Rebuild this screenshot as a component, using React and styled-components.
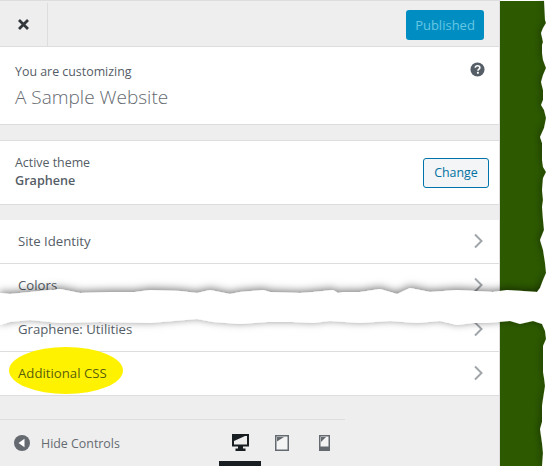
import React from 'react';
import styled, { createGlobalStyle } from 'styled-components';

const GlobalStyle = createGlobalStyle`
  html, body {
    margin: 0;
    padding: 0;
    background: #fff;
  }
  * {
    box-sizing: border-box;
  }
`;

const Page = styled.div`
  position: relative;
  display: flex;
  width: 547px;
  height: 466px;
  overflow: hidden;
  font-family: "Open Sans", "Noto Sans", sans-serif;
  font-size: 13px;
  color: #555d66;
`;

const Sidebar = styled.div`
  display: flex;
  flex-direction: column;
  width: 500px;
  background: #eeeeee;
  border-top: 1px solid #dddddd;
  border-right: 1px solid #dddddd;
`;

const Preview = styled.div`
  flex: 1;
  margin-top: 1px;
  background: #2d5a00;
`;

const Toolbar = styled.div`
  display: flex;
  align-items: center;
  justify-content: space-between;
  height: 46px;
  padding-right: 15px;
  border-bottom: 1px solid #dddddd;
`;

const CloseButton = styled.div`
  display: flex;
  align-items: center;
  justify-content: center;
  width: 48px;
  height: 43px;
  margin-top: 2px;
  border-right: 1px solid #dddddd;
  color: #32373c;
`;

const PublishButton = styled.div`
  width: 78px;
  height: 30px;
  margin-top: 3px;
  border-radius: 3px;
  background: #008ec2;
  color: #66c6e4;
  font-size: 13px;
  line-height: 30px;
  text-align: center;
`;

const Info = styled.div`
  position: relative;
  height: 78px;
  padding: 16px 15px 0;
  background: #fff;
  border-bottom: 1px solid #dddddd;
`;

const Label = styled.div`
  font-size: 12.4px;
  line-height: 18px;
`;

const SiteTitle = styled.div`
  margin-top: 3px;
  font-size: 19px;
  font-weight: 300;
  line-height: 26px;
  color: #656a70;
`;

const HelpIcon = styled.svg`
  position: absolute;
  top: 15px;
  right: 14px;
  width: 15px;
  height: 15px;
`;

const ThemeSection = styled.div`
  display: flex;
  align-items: center;
  justify-content: space-between;
  height: 65px;
  margin-top: 15px;
  padding: 0 10px 0 15px;
  background: #fff;
  border-top: 1px solid #dddddd;
  border-bottom: 1px solid #dddddd;
`;

const ThemeName = styled.div`
  margin-top: -1px;
  font-size: 12.6px;
  font-weight: 600;
  line-height: 20px;
`;

const ChangeButton = styled.div`
  width: 66px;
  height: 30px;
  border: 1px solid #0073aa;
  border-radius: 3px;
  background: #f3f5f6;
  color: #0071a1;
  font-size: 12.4px;
  line-height: 28px;
  text-align: center;
`;

const MenuList = styled.div`
  margin-top: 15px;
`;

const MenuRow = styled.div`
  position: relative;
  display: flex;
  align-items: center;
  justify-content: space-between;
  height: 44px;
  padding: 0 15px 0 18px;
  background: #fff;
  border-bottom: 1px solid #dddddd;
  font-size: 13.2px;
  font-weight: 500;
`;

const MenuLabel = styled.span`
  position: relative;
  z-index: 1;
  margin-top: -2px;
  color: ${(p) => (p.$marked ? '#5a5f0c' : '#555d66')};
`;

const Highlight = styled.div`
  position: absolute;
  top: -5px;
  left: 9px;
  width: 114px;
  height: 47px;
  border-radius: 50%;
  background: #fff200;
`;

const Chevron = styled.svg`
  width: 11px;
  height: 16px;
  margin-top: -1px;
  color: #a0a5aa;
`;

const Footer = styled.div`
  display: flex;
  align-items: center;
  width: 345px;
  height: 47px;
  margin-top: 23px;
  border-top: 1px solid #dddddd;
  padding-left: 14px;
`;

const HideControls = styled.div`
  display: flex;
  align-items: center;
  gap: 11px;
  width: 205px;
  flex-shrink: 0;
  color: #656a70;
  font-size: 12.4px;
`;

const Devices = styled.div`
  display: flex;
  height: 46px;
`;

const DeviceButton = styled.div`
  display: flex;
  align-items: center;
  justify-content: center;
  width: 42px;
  padding-top: 4px;
  border-bottom: 5px solid ${(p) => (p.$active ? '#191e23' : 'transparent')};
  color: ${(p) => (p.$active ? '#191e23' : '#656a70')};
`;

const TornEdges = styled.svg`
  position: absolute;
  top: 0;
  left: 0;
  width: 547px;
  height: 466px;
  z-index: 2;
  pointer-events: none;
`;

const menuItems = ['Site Identity', 'Colors', 'Graphene: Utilities'];

// outline of the white torn paper: right edge down to the rip, across, back, right edge again
const tornPoints = [
  [547, 0], [544, 0], [545, 20], [546, 23], [543, 28], [541, 33], [543, 42], [542, 45], [542, 53],
  [543, 60], [546, 68], [543, 75], [541, 82], [543, 90], [543, 100], [541, 105], [544, 110],
  [546, 118], [544, 128], [540, 137], [542, 143], [542, 160], [543, 167], [546, 172], [543, 178],
  [542, 190], [543, 200], [542, 207], [543, 220], [544, 230], [540, 240], [543, 250], [545, 263],
  [546, 273], [543, 280], [540, 288], [537, 292], [523, 291], [507, 290], [493, 292], [457, 290],
  [430, 292], [410, 288], [397, 294], [380, 289], [360, 292], [343, 292], [338, 293], [333, 290],
  [313, 292], [300, 293], [270, 292], [263, 290], [240, 292], [230, 294], [210, 290], [197, 293],
  [180, 291], [150, 290], [135, 292], [110, 292], [80, 293], [70, 291], [60, 289], [30, 292],
  [10, 294], [0, 293], [0, 325], [10, 322], [30, 320], [60, 323], [100, 322], [150, 323],
  [197, 319], [213, 322], [240, 324], [267, 322], [293, 322], [313, 323], [330, 321], [360, 323],
  [390, 321], [417, 323], [440, 321], [457, 325], [473, 323], [487, 323], [510, 321], [520, 324],
  [533, 321], [542, 324], [545, 331], [546, 339], [543, 346], [543, 372], [544, 378], [545, 386],
  [543, 399], [542, 406], [542, 422], [540, 429], [542, 443], [543, 453], [542, 466], [547, 466],
];

const App = () => (
  <Page>
    <GlobalStyle />
    <Sidebar>
      <Toolbar>
        <CloseButton>
          <svg width="13" height="13" viewBox="0 0 13 13">
            <path d="M2 2l9 9M11 2l-9 9" stroke="currentColor" strokeWidth="2.8" />
          </svg>
        </CloseButton>
        <PublishButton>Published</PublishButton>
      </Toolbar>
      <Info>
        <Label>You are customizing</Label>
        <SiteTitle>A Sample Website</SiteTitle>
        <HelpIcon viewBox="0 0 16 16">
          <circle cx="8" cy="8" r="7.5" fill="#555d66" />
          <path d="M5.6 6.2C5.7 4.7 6.7 4 8.1 4c1.4 0 2.4.8 2.4 2 0 1.700-2 1.700-2 3.300" fill="none" stroke="#fff" strokeWidth="1.700" />
          <rect x="7.400" y="10.500" width="2" height="2" fill="#fff" />
        </HelpIcon>
      </Info>
      <ThemeSection>
        <div>
          <Label>Active theme</Label>
          <ThemeName>Graphene</ThemeName>
        </div>
        <ChangeButton>Change</ChangeButton>
      </ThemeSection>
      <MenuList>
        {menuItems.map((item) => (
          <MenuRow key={item}>
            <MenuLabel>{item}</MenuLabel>
            <Chevron viewBox="0 0 11 16">
              <path d="M2 1.500l6.500 6.500L2 14.500" fill="none" stroke="currentColor" strokeWidth="2" />
            </Chevron>
          </MenuRow>
        ))}
        <MenuRow>
          <Highlight />
          <MenuLabel $marked>Additional CSS</MenuLabel>
          <Chevron viewBox="0 0 11 16">
            <path d="M2 1.500l6.500 6.500L2 14.500" fill="none" stroke="currentColor" strokeWidth="2" />
          </Chevron>
        </MenuRow>
      </MenuList>
      <Footer>
        <HideControls>
          <svg width="16" height="16" viewBox="0 0 16 16">
            <circle cx="8" cy="8" r="8" fill="#656a70" />
            <path d="M10.500 3.800v8.400L4.500 8z" fill="#fff" />
          </svg>
          Hide Controls
        </HideControls>
        <Devices>
          <DeviceButton $active>
            <svg width="17" height="17" viewBox="0 0 17 17">
              <path d="M0 0h17v12.500H11v2h2.500V17h-10v-2.500H6v-2H0z" fill="currentColor" />
              <path d="M2 2h13v8.500H2z" fill="#eeeeee" />
              <path d="M2 2h11L2 7z" fill="currentColor" />
            </svg>
          </DeviceButton>
          <DeviceButton>
            <svg width="14" height="16" viewBox="0 0 14 16">
              <path d="M0 0h14v16H0z" fill="currentColor" />
              <path d="M1.500 1.500h11v13h-11z" fill="#f4f4f4" />
              <path d="M2 2h7L2 6.500z" fill="currentColor" />
            </svg>
          </DeviceButton>
          <DeviceButton>
            <svg width="11" height="16" viewBox="0 0 11 16">
              <path d="M0 0h11v16H0z" fill="currentColor" />
              <path d="M1.500 1.500h8v10h-8z" fill="#f4f4f4" />
              <path d="M2 2h5L2 7z" fill="currentColor" />
            </svg>
          </DeviceButton>
        </Devices>
      </Footer>
    </Sidebar>
    <Preview />
    <TornEdges viewBox="0 0 547 466">
      <defs>
        <filter id="paper-shadow" x="-5%" y="-5%" width="110%" height="110%">
          <feDropShadow dx="0" dy="-1.5" stdDeviation="4" floodColor="#000" floodOpacity="0.55" />
        </filter>
      </defs>
      <path
        d={`M${tornPoints.map((p) => p.join(' ')).join('L')}Z`}
        fill="#fff"
        filter="url(#paper-shadow)"
      />
    </TornEdges>
  </Page>
);

export default App;
